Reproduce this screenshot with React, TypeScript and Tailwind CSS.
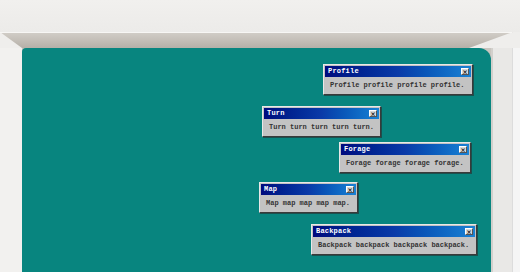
import React from 'react';

type WinProps = { title: string; text: string; x: number; y: number; w: number };

const mono = "font-['Liberation_Mono','DejaVu_Sans_Mono',monospace]";

function RetroWindow({ title, text, x, y, w }: WinProps) {
  return (
    <div
      className="absolute bg-[#c3c3c3] border border-t-[#e8e8e8] border-l-[#e8e8e8] border-r-[#3a3a3a] border-b-[#3a3a3a] p-[1px] shadow-[1px_1px_0_#1b4f4d]"
      style={{ left: x, top: y, width: w }}
    >
      <div className="h-[11px] flex items-center justify-between pl-[3px] pr-[2px] bg-gradient-to-r from-[#000a7e] via-[#0a3aa8] to-[#1a82d4]">
        <span className={`${mono} text-[7px] font-bold leading-none text-white tracking-[0.2px]`}>{title}</span>
        <span className="w-[8px] h-[7px] bg-[#d6d6d6] border border-t-white border-l-white border-r-[#555] border-b-[#555] flex items-center justify-center text-[6px] leading-none font-bold text-black font-['DejaVu_Sans',sans-serif]">
          ×
        </span>
      </div>
      <div className="h-[16px] flex items-center pl-[5px]">
        <span className={`${mono} text-[7px] font-bold leading-none text-[#333] whitespace-nowrap`}>{text}</span>
      </div>
    </div>
  );
}

const windows: WinProps[] = [
  { title: 'Profile', text: 'Profile profile profile profile.', x: 301, y: 16, w: 150 },
  { title: 'Turn', text: 'Turn turn turn turn turn.', x: 240, y: 58, w: 119 },
  { title: 'Forage', text: 'Forage forage forage forage.', x: 317, y: 94, w: 132 },
  { title: 'Map', text: 'Map map map map map.', x: 237, y: 134, w: 99 },
  { title: 'Backpack', text: 'Backpack backpack backpack backpack.', x: 289, y: 176, w: 166 },
];

export default function App() {
  return (
    <div className="w-[520px] h-[272px] overflow-hidden bg-[#efeeec] flex flex-col">
      {/* wall above monitor */}
      <div className="h-[32px] bg-gradient-to-b from-[#f1f0ee] to-[#ecebe9]" />

      {/* top bevel */}
      <div className="relative h-[16px]">
        <div className="absolute top-0 left-0 h-[16px] w-[513px] bg-gradient-to-b from-[#d2cec8] via-[#c4bfb8] to-[#b5b0a8] [clip-path:polygon(0_0,100%_0,469px_100%,22px_100%)]" />
        <div className="absolute top-0 left-0 h-px w-[512px] bg-[#f7f6f4]" />
      </div>

      {/* screen row */}
      <div className="flex flex-1">
        <div className="w-[22px] bg-[#f2f1ef]" />
        <div className="w-[469px] bg-[#c9c5bf]">
          <div className="relative h-full bg-[#08857f] rounded-tr-[12px] rounded-tl-[4px]">
            {windows.map((w) => (
              <RetroWindow key={w.title} {...w} />
            ))}
          </div>
        </div>
        <div className="w-[21px] bg-[#e9e8e6] border-l-2 border-[#d2d0cc]" />
        <div className="flex-1 bg-[#f5f5f5] border-l border-[#dcdcdc]" />
      </div>
    </div>
  );
}
